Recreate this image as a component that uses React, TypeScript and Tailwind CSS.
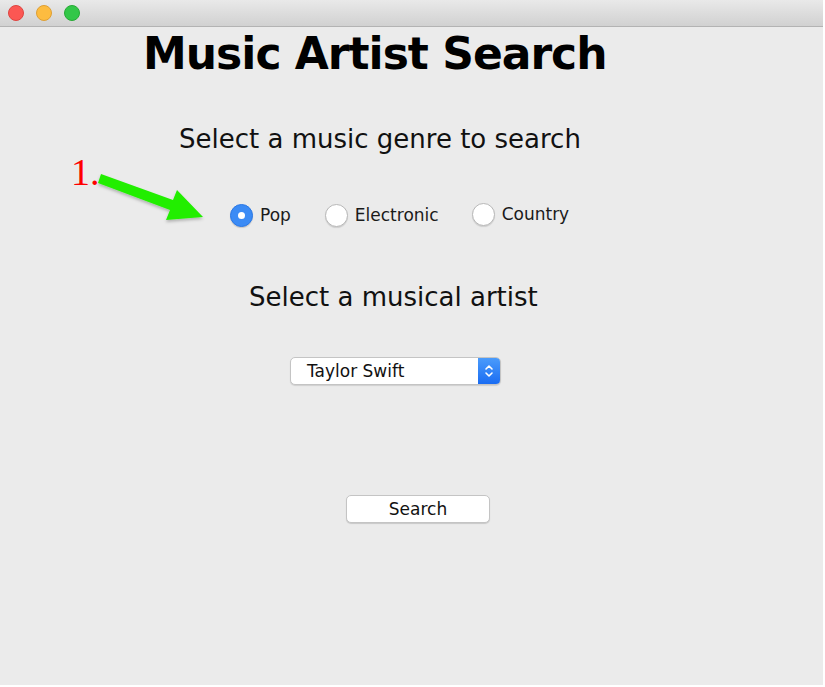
import { useState } from 'react';

function Radio({ label, checked, onSelect, className }: { label: string; checked: boolean; onSelect: () => void; className?: string }) {
  return (
    <label className={`flex items-center gap-[7px] cursor-pointer ${className ?? ''}`} onClick={onSelect}>
      {checked ? (
        <span className="w-[23px] h-[23px] rounded-full bg-[#3b8bf5] border border-[#2a78e6] flex items-center justify-center shadow-[0_1px_1px_rgba(0,0,0,0.15)]">
          <span className="w-[7px] h-[7px] rounded-full bg-white" />
        </span>
      ) : (
        <span className="w-[23px] h-[23px] rounded-full bg-white border border-[#b8b8b8] shadow-[0_1px_1px_rgba(0,0,0,0.12)]" />
      )}
      <span className="text-[17px] text-[#1a1a1a]">{label}</span>
    </label>
  );
}

export default function App() {
  const [genre, setGenre] = useState('Pop');

  return (
    <div className="w-[825px] h-[687px] bg-white overflow-hidden" style={{ fontFamily: '"DejaVu Sans", "Lucida Grande", sans-serif' }}>
      <div className="w-[823px] h-[685px] bg-[#ebebeb] flex flex-col">
        {/* Title bar */}
        <div className="h-[27px] shrink-0 bg-gradient-to-b from-[#e9e9e9] to-[#d1d1d1] border-b border-[#b3b3b3] flex items-center gap-[12px] pl-[8px]">
          <span className="w-[16px] h-[16px] rounded-full bg-[#fc5753] border border-[#de4440]" />
          <span className="w-[16px] h-[16px] rounded-full bg-[#fdbc40] border border-[#de9f34]" />
          <span className="w-[16px] h-[16px] rounded-full bg-[#33c748] border border-[#27aa35]" />
        </div>

        {/* Title */}
        <div className="pl-[143px] pt-[1px]">
          <h1 className="text-[44px] leading-[52px] font-bold text-black tracking-[-1px]">Music Artist Search</h1>
        </div>

        <div className="pl-[179px] mt-[44px]">
          <h2 className="text-[26px] leading-[30px] text-[#111]">Select a music genre to search</h2>
        </div>

        {/* Genre row with annotation */}
        <div className="relative h-[60px] mt-[2px]">
          <span className="absolute left-[71px] top-[-4px] text-[38px] leading-[40px] text-[#f00]" style={{ fontFamily: '"Liberation Serif", serif' }}>
            1.
          </span>
          <svg className="absolute left-[95px] top-[14px]" width="115" height="55" viewBox="0 0 115 55">
            <defs>
              <filter id="sh" x="-10%" y="-10%" width="130%" height="140%">
                <feDropShadow dx="0" dy="2" stdDeviation="1.5" floodColor="#000" floodOpacity="0.25" />
              </filter>
            </defs>
            <g filter="url(#sh)">
              <polygon points="6,4 78,30 82,20 108,47 71,50 75,40 3,13" fill="#22ee00" />
            </g>
          </svg>
          <div className="absolute left-[230px] top-[47px] flex items-center">
            <Radio label="Pop" checked={genre === 'Pop'} onSelect={() => setGenre('Pop')} />
            <Radio label="Electronic" checked={genre === 'Electronic'} onSelect={() => setGenre('Electronic')} className="ml-[34px]" />
            <Radio label="Country" checked={genre === 'Country'} onSelect={() => setGenre('Country')} className="ml-[33px] -mt-[3px]" />
          </div>
        </div>

        <div className="pl-[249px] mt-[66px]">
          <h2 className="text-[26px] leading-[30px] text-[#111]">Select a musical artist</h2>
        </div>

        {/* Artist dropdown */}
        <div className="pl-[290px] mt-[45px]">
          <div className="w-[211px] h-[28px] rounded-[5px] bg-white border border-[#c4c4c4] shadow-[0_1px_1px_rgba(0,0,0,0.12)] flex overflow-hidden">
            <span className="flex-1 pl-[16px] text-[17px] leading-[26px] text-[#111]">Taylor Swift</span>
            <span className="w-[22px] bg-gradient-to-b from-[#4a9bfb] to-[#1a6cf2] flex items-center justify-center">
              <svg width="10" height="16" viewBox="0 0 10 16" fill="none" stroke="white" strokeWidth="1.6" strokeLinecap="round" strokeLinejoin="round">
                <path d="M2 6 L5 3 L8 6" />
                <path d="M2 10 L5 13 L8 10" />
              </svg>
            </span>
          </div>
        </div>

        {/* Search button */}
        <div className="pl-[346px] mt-[110px]">
          <button className="w-[144px] h-[28px] rounded-[5px] bg-white border border-[#c4c4c4] shadow-[0_1px_1px_rgba(0,0,0,0.15)] text-[17px] leading-[26px] text-[#111]">
            Search
          </button>
        </div>
      </div>
    </div>
  );
}
